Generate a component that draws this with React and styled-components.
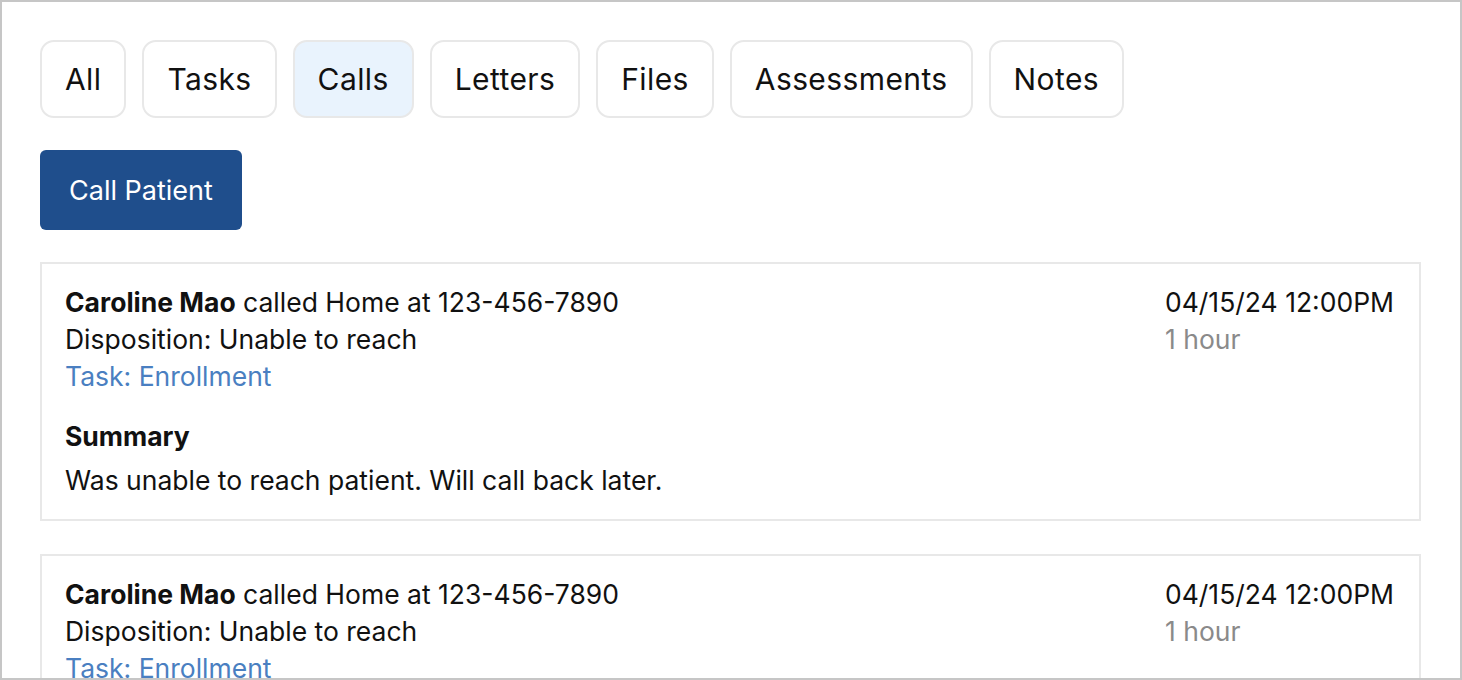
import styled, { createGlobalStyle } from "styled-components";

const GlobalStyle = createGlobalStyle`
  html, body {
    margin: 0;
    padding: 0;
    background: #fff;
  }
  * {
    box-sizing: border-box;
  }
`;

const tabs = ["All", "Tasks", "Calls", "Letters", "Files", "Assessments", "Notes"];

const calls = [
  {
    id: 1,
    caller: "Caroline Mao",
    location: "Home",
    phone: "123-456-7890",
    disposition: "Unable to reach",
    task: "Enrollment",
    date: "04/15/24 12:00PM",
    duration: "1 hour",
    summary: "Was unable to reach patient. Will call back later.",
  },
  {
    id: 2,
    caller: "Caroline Mao",
    location: "Home",
    phone: "123-456-7890",
    disposition: "Unable to reach",
    task: "Enrollment",
    date: "04/15/24 12:00PM",
    duration: "1 hour",
    summary: "Was unable to reach patient. Will call back later.",
  },
];

const App = () => {
  return (
    <>
      <GlobalStyle />
      <Frame>
        <TabRow>
          {tabs.map((t) => (
            <Tab key={t} $active={t === "Calls"}>
              {t}
            </Tab>
          ))}
        </TabRow>
        <CallButton>Call Patient</CallButton>
        <CardList>
          {calls.map((c) => (
            <Card key={c.id}>
              <CardTop>
                <Details>
                  <Line>
                    <strong>{c.caller}</strong> called {c.location} at {c.phone}
                  </Line>
                  <Line>Disposition: {c.disposition}</Line>
                  <TaskLink href="#">Task: {c.task}</TaskLink>
                </Details>
                <Meta>
                  <Line>{c.date}</Line>
                  <Muted>{c.duration}</Muted>
                </Meta>
              </CardTop>
              <SummaryTitle>Summary</SummaryTitle>
              <SummaryText>{c.summary}</SummaryText>
            </Card>
          ))}
        </CardList>
      </Frame>
    </>
  );
};

const Frame = styled.div`
  width: 1462px;
  height: 680px;
  border: 2px solid #c6c6c6;
  padding: 38px 39px 0 38px;
  overflow: hidden;
  font-family: Inter, "Liberation Sans", sans-serif;
  color: #111;
  display: flex;
  flex-direction: column;
  align-items: flex-start;
  & > * {
    flex-shrink: 0;
  }
`;

const TabRow = styled.div`
  display: flex;
  gap: 16px;
`;

const Tab = styled.button`
  height: 78px;
  padding: 0 23px;
  border: 2px solid #e8e8e8;
  border-radius: 14px;
  background: ${(p) => (p.$active ? "#e9f3fd" : "#fff")};
  font-family: inherit;
  font-size: 30px;
  letter-spacing: 0.4px;
  color: #111;
  cursor: pointer;
`;

const CallButton = styled.button`
  margin-top: 32px;
  height: 80px;
  padding: 0 29px;
  border: none;
  border-radius: 6px;
  background: #1f4e8c;
  color: #fff;
  font-family: inherit;
  font-size: 27px;
  cursor: pointer;
`;

const CardList = styled.div`
  margin-top: 32px;
  width: 100%;
  display: flex;
  flex-direction: column;
  gap: 33px;
`;

const Card = styled.div`
  flex-shrink: 0;
  border: 2px solid #e8e8e8;
  padding: 20px 25px 20px 23px;
  font-size: 26.5px;
  line-height: 37px;
`;

const CardTop = styled.div`
  display: flex;
  justify-content: space-between;
`;

const Details = styled.div`
  display: flex;
  flex-direction: column;
  strong {
    font-weight: 700;
  }
`;

const Meta = styled.div`
  display: flex;
  flex-direction: column;
  align-items: flex-start;
`;

const Line = styled.div``;

const Muted = styled.div`
  color: #8a8a8a;
`;

const TaskLink = styled.a`
  color: #4a7fc1;
  text-decoration: none;
`;

const SummaryTitle = styled.div`
  margin-top: 23px;
  font-weight: 700;
`;

const SummaryText = styled.div`
  margin-top: 7px;
`;

export default App;
